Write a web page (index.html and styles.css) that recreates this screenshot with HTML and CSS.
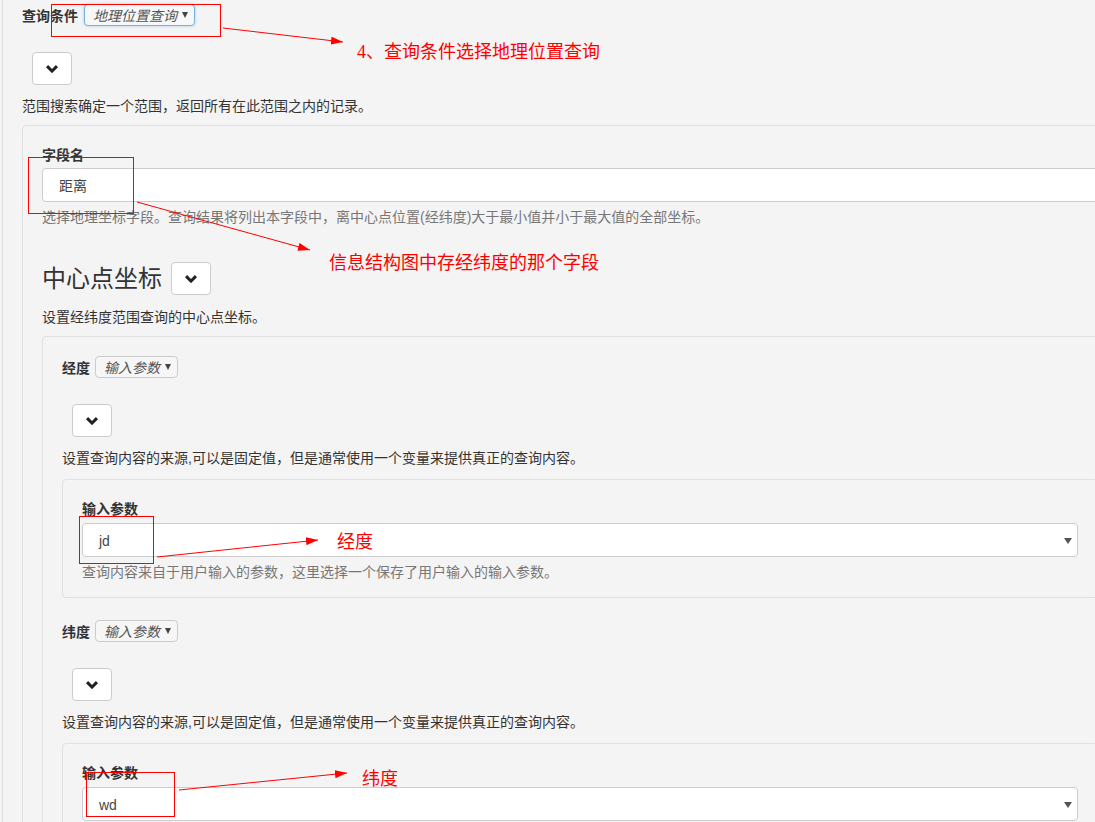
FILE: index.html
```html
<!DOCTYPE html>
<html lang="zh-CN">
<head>
<meta charset="utf-8">
<title>查询条件</title>
<link rel="stylesheet" href="styles.css">
</head>
<body>
<div class="page">
  <div class="inline-row">
    <span class="lbl">查询条件</span>
    <div class="sel-sm is-focus"><span class="sel-text">地理位置查询</span><span class="caret"></span></div>
  </div>
  <div class="toggle-wrap">
    <button class="toggle" type="button"><svg width="12" height="8" viewBox="0 0 12 8"><polygon points="0,2.2 2.1,0.1 6,4 9.9,0.1 12,2.2 6,8.2" fill="#222"/></svg></button>
  </div>
  <p class="desc">范围搜索确定一个范围，返回所有在此范围之内的记录。</p>

  <div class="well">
    <div class="field-label">字段名</div>
    <div class="input">距离</div>
    <p class="help">选择地理坐标字段。查询结果将列出本字段中，离中心点位置(经纬度)大于最小值并小于最大值的全部坐标。</p>

    <div class="heading-row">
      <h3 class="heading">中心点坐标</h3>
      <button class="toggle" type="button"><svg width="12" height="8" viewBox="0 0 12 8"><polygon points="0,2.2 2.1,0.1 6,4 9.9,0.1 12,2.2 6,8.2" fill="#222"/></svg></button>
    </div>
    <p class="desc desc-head">设置经纬度范围查询的中心点坐标。</p>

    <div class="well well-inner">
      <div class="inline-row">
        <span class="lbl lbl-sm">经度</span>
        <div class="sel-sm"><span class="sel-text">输入参数</span><span class="caret"></span></div>
      </div>
      <div class="toggle-wrap">
        <button class="toggle" type="button"><svg width="12" height="8" viewBox="0 0 12 8"><polygon points="0,2.2 2.1,0.1 6,4 9.9,0.1 12,2.2 6,8.2" fill="#222"/></svg></button>
      </div>
      <p class="desc">设置查询内容的来源,可以是固定值，但是通常使用一个变量来提供真正的查询内容。</p>
      <div class="well well-deep">
        <div class="field-label">输入参数</div>
        <div class="sel-lg"><span>jd</span><span class="caret caret-lg"></span></div>
        <p class="help">查询内容来自于用户输入的参数，这里选择一个保存了用户输入的输入参数。</p>
      </div>

      <div class="inline-row row-after">
        <span class="lbl lbl-sm">纬度</span>
        <div class="sel-sm"><span class="sel-text">输入参数</span><span class="caret"></span></div>
      </div>
      <div class="toggle-wrap">
        <button class="toggle" type="button"><svg width="12" height="8" viewBox="0 0 12 8"><polygon points="0,2.2 2.1,0.1 6,4 9.9,0.1 12,2.2 6,8.2" fill="#222"/></svg></button>
      </div>
      <p class="desc">设置查询内容的来源,可以是固定值，但是通常使用一个变量来提供真正的查询内容。</p>
      <div class="well well-deep well-last">
        <div class="field-label">输入参数</div>
        <div class="sel-lg"><span>wd</span><span class="caret caret-lg"></span></div>
      </div>
    </div>
  </div>
</div>

<div class="annot">
  <svg class="annot-svg" width="1095" height="822" viewBox="0 0 1095 822">
    <defs>
      <marker id="ah" viewBox="0 0 12 8" refX="12" refY="4" markerWidth="12" markerHeight="8" orient="auto" markerUnits="userSpaceOnUse">
        <path d="M0,0 L12,4 L0,8 z" fill="#f00"/>
      </marker>
    </defs>
    <rect x="51.5" y="4.5" width="169" height="32" fill="none" stroke="#f00" stroke-width="1"/>
    <rect x="28.5" y="157.5" width="105" height="56" fill="none" stroke="#f00" stroke-width="1"/>
    <rect x="79.5" y="516.5" width="74" height="47" fill="none" stroke="#f00" stroke-width="1"/>
    <rect x="86.5" y="772.5" width="88" height="44" fill="none" stroke="#f00" stroke-width="1"/>
    <line x1="223" y1="28" x2="343" y2="42" stroke="#f00" stroke-width="1" marker-end="url(#ah)"/>
    <line x1="137" y1="202" x2="310" y2="250" stroke="#f00" stroke-width="1" marker-end="url(#ah)"/>
    <line x1="157" y1="557" x2="318" y2="540" stroke="#f00" stroke-width="1" marker-end="url(#ah)"/>
    <line x1="179" y1="790" x2="347" y2="773" stroke="#f00" stroke-width="1" marker-end="url(#ah)"/>
  </svg>
  <span class="note note-1">4、查询条件选择地理位置查询</span>
  <span class="note note-2">信息结构图中存经纬度的那个字段</span>
  <span class="note note-3">经度</span>
  <span class="note note-4">纬度</span>
</div>
</body>
</html>
```

FILE: styles.css
```css
html {
  overflow: hidden;
}

body {
  margin: 0;
  background: #f4f4f4;
  font-family: "Liberation Sans", "Noto Sans CJK SC", sans-serif;
  font-size: 14px;
  line-height: 20px;
  color: #333;
  position: relative;
  min-height: 822px;
}

.page {
  width: 1116px;
  margin-left: 2px;
  border-left: 1px solid #dedede;
  padding: 4px 0 40px 19px;
  min-height: 822px;
}

.inline-row {
  display: flex;
  align-items: center;
  height: 22px;
}

.row-after {
  margin-top: 22px;
}

.lbl {
  font-weight: bold;
  margin-right: 6px;
  padding-top: 2px;
}

.lbl-sm {
  margin-right: 5px;
}

.sel-sm {
  box-sizing: border-box;
  height: 22px;
  display: inline-flex;
  align-items: center;
  padding: 0 6px 0 8px;
  border: 1px solid #ccc;
  border-radius: 4px;
  background: #f6f6f6;
  color: #555;
}

.sel-sm.is-focus {
  border-color: #74b3e6;
  box-shadow: 0 0 3px rgba(102, 175, 233, 0.6);
  background: #f8f8f8;
}

.sel-text {
  font-style: italic;
  margin-right: 5px;
  padding-top: 1px;
}

.caret {
  display: inline-block;
  width: 0;
  height: 0;
  border-left: 3.5px solid transparent;
  border-right: 3.5px solid transparent;
  border-top: 6px solid #444;
}

.caret-lg {
  border-left-width: 4px;
  border-right-width: 4px;
  border-top-width: 6px;
  border-top-color: #555;
}

.toggle-wrap {
  margin-top: 26px;
  padding-left: 10px;
  height: 33px;
}

.toggle {
  box-sizing: border-box;
  width: 40px;
  height: 33px;
  padding: 0;
  border: 1px solid #ccc;
  border-radius: 4px;
  background: #fff;
  display: inline-flex;
  align-items: center;
  justify-content: center;
}

.toggle svg {
  display: block;
  margin-top: 1px;
}

.desc {
  margin: 11px 0 0;
}

.desc-head {
  margin-top: 12px;
}

.well {
  margin-top: 9px;
  border: 1px solid #e0e0e0;
  border-radius: 4px;
  background: #f4f4f4;
  padding: 19px 19px 15px;
}

.well-deep {
  margin-top: 11px;
}

.field-label {
  font-weight: bold;
  margin-bottom: 3px;
}

.well-deep .field-label {
  margin-bottom: 4px;
}

.input {
  box-sizing: border-box;
  height: 34px;
  border: 1px solid #ccc;
  border-radius: 4px;
  background: #fff;
  padding: 2px 12px 0 16px;
  display: flex;
  align-items: center;
  color: #444;
}

.sel-lg {
  box-sizing: border-box;
  height: 34px;
  border: 1px solid #ccc;
  border-radius: 4px;
  background: #fff;
  padding: 1px 5px 0 16px;
  display: flex;
  align-items: center;
  justify-content: space-between;
  color: #444;
  font-size: 14px;
}

.help {
  margin: 5px 0 0;
  color: #777;
}

.heading-row {
  display: flex;
  align-items: center;
  margin-top: 35px;
  height: 33px;
}

.heading {
  margin: 0 9px 0 0;
  font-size: 24px;
  font-weight: normal;
  line-height: 30px;
  color: #333;
}

.annot {
  position: absolute;
  left: 0;
  top: 0;
  width: 1095px;
  height: 822px;
  pointer-events: none;
}

.annot-svg {
  position: absolute;
  left: 0;
  top: 0;
}

.note {
  position: absolute;
  color: #f00;
  font-family: "Liberation Serif", "Noto Sans CJK SC", serif;
  font-size: 18px;
  line-height: 20px;
  white-space: nowrap;
}

.note-1 { left: 357px; top: 42px; }
.note-2 { left: 329px; top: 253px; }
.note-3 { left: 337px; top: 532px; }
.note-4 { left: 362px; top: 769px; }
```
